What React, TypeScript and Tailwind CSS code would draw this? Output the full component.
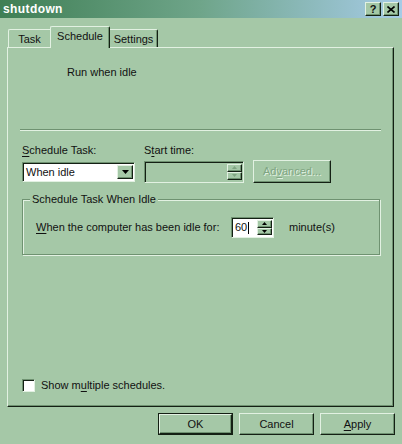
import React from "react";

const raised =
  "border border-t-[#e2f1e2] border-l-[#e2f1e2] border-r-[#142014] border-b-[#142014] shadow-[inset_-1px_-1px_0_#6f9271]";
const sunken =
  "border border-t-[#6f9271] border-l-[#6f9271] border-r-[#e2f1e2] border-b-[#e2f1e2] shadow-[inset_1px_1px_0_#142014]";

function Tri({ up, w = 7, h = 4, color = "#000" }: { up?: boolean; w?: number; h?: number; color?: string }) {
  return (
    <svg width={w} height={h} viewBox={`0 0 ${w} ${h}`}>
      <path d={up ? `M${w / 2} 0 L${w} ${h} L0 ${h}Z` : `M0 0 L${w} 0 L${w / 2} ${h}Z`} fill={color} />
    </svg>
  );
}

function Spin({ disabled }: { disabled?: boolean }) {
  const c = disabled ? "#7fa582" : "#000";
  return (
    <div className="flex flex-col w-[15px] self-stretch">
      <div className={`flex-1 flex items-center justify-center bg-[#a5c8a7] ${raised}`}>
        <Tri up w={5} h={3} color={c} />
      </div>
      <div className={`flex-1 flex items-center justify-center bg-[#a5c8a7] ${raised}`}>
        <Tri w={5} h={3} color={c} />
      </div>
    </div>
  );
}

function U({ children }: { children: React.ReactNode }) {
  return <span className="underline underline-offset-[2px]">{children}</span>;
}

export default function App() {
  return (
    <div className="w-[402px] h-[444px] bg-[#a5c8a7] flex flex-col font-['Liberation_Sans',Arial,sans-serif] text-[11px] leading-[13px] text-[#111] overflow-hidden">
      {/* Title bar */}
      <div className="h-[18px] flex items-center justify-between pl-[3px] pr-[3px] bg-gradient-to-r from-[#3f7f55] via-[#6fa58a] to-[#a6cbe6]">
        <span className="text-white font-bold text-[12px] tracking-[0.4px] leading-[14px]">shutdown</span>
        <div className="flex gap-[2px]">
          <div className={`w-[16px] h-[14px] bg-[#a5c8a7] flex items-center justify-center font-bold text-[11px] leading-[11px] ${raised}`}>?</div>
          <div className={`w-[16px] h-[14px] bg-[#a5c8a7] flex items-center justify-center ${raised}`}>
            <svg width="8" height="7" viewBox="0 0 8 7">
              <path d="M0.5 0.5 L7.5 6.5 M7.5 0.5 L0.5 6.5" stroke="#000" strokeWidth="1.6" />
            </svg>
          </div>
        </div>
      </div>

      {/* Tabs */}
      <div className="relative z-10 flex items-end mt-[8px] ml-[8px] -mb-[1px] h-[22px]">
        <div className="w-[42px] h-[18px] mb-[1px] flex items-center justify-center pt-[2px] border-t border-l border-t-[#e2f1e2] border-l-[#e2f1e2] rounded-tl-[2px]">
          Task
        </div>
        <div className="w-[60px] h-[22px] bg-[#a5c8a7] flex items-center justify-center pb-[2px] border-t border-l border-r border-t-[#e2f1e2] border-l-[#e2f1e2] border-r-[#142014] shadow-[inset_-1px_0_0_#6f9271] rounded-t-[2px]">
          Schedule
        </div>
        <div className="w-[48px] h-[18px] mb-[1px] flex items-center justify-center pt-[2px] border-t border-r border-t-[#e2f1e2] border-r-[#142014] shadow-[inset_-1px_0_0_#6f9271] rounded-tr-[2px]">
          Settings
        </div>
      </div>

      {/* Panel */}
      <div className={`ml-[7px] w-[387px] h-[360px] flex flex-col ${raised}`}>
        <div className="mt-[18px] ml-[59px]">Run when idle</div>

        <div className="mt-[50px] ml-[12px] w-[361px] h-[2px] border-t border-b border-t-[#6f9271] border-b-[#e2f1e2]" />

        <div className="mt-[13px] ml-[14px] flex">
          <div className="w-[122px] flex flex-col">
            <div>
              <U>S</U>chedule Task:
            </div>
            <div className={`mt-[5px] w-[113px] h-[20px] bg-white flex items-stretch p-[2px] pr-[1px] ${sunken}`}>
              <div className="flex-1 pl-[1px] flex items-center">When idle</div>
              <div className={`w-[16px] flex items-center justify-center bg-[#a5c8a7] ${raised}`}>
                <Tri w={7} h={4} />
              </div>
            </div>
          </div>
          <div className="flex flex-col">
            <div>
              S<U>t</U>art time:
            </div>
            <div className="mt-[3px] flex items-center">
              <div className={`w-[100px] h-[22px] flex items-stretch justify-end p-[2px] pr-[1px] ${sunken}`}>
                <Spin disabled />
              </div>
              <div
                className={`ml-[9px] w-[78px] h-[23px] flex items-center justify-center text-[#7fa582] [text-shadow:1px_1px_0_#e2f1e2] ${raised}`}
              >
                Ad<U>v</U>anced...
              </div>
            </div>
          </div>
        </div>

        {/* Group box */}
        <div className="relative mt-[16px] ml-[14px] w-[358px] h-[56px] border border-[#6f9271] shadow-[inset_1px_1px_0_#e2f1e2,1px_1px_0_#e2f1e2]">
          <div className="absolute -top-[7px] left-[7px] px-[2px] bg-[#a5c8a7]">Schedule Task When Idle</div>
          <div className="mt-[17px] ml-[13px] flex items-center">
            <div className="w-[195px]">
              <U>W</U>hen the computer has been idle for:
            </div>
            <div className={`w-[43px] h-[21px] bg-white flex items-stretch p-[2px] pr-[1px] ${sunken}`}>
              <div className="flex-1 flex items-center pl-[1px]">
                60<span className="inline-block w-px h-[12px] bg-black ml-[1px]" />
              </div>
              <Spin />
            </div>
            <div className="ml-[15px]">minute(s)</div>
          </div>
        </div>

        <div className="mt-[124px] ml-[14px] flex items-center">
          <div className={`w-[13px] h-[13px] bg-white ${sunken}`} />
          <div className="ml-[6px]">
            Show m<U>u</U>ltiple schedules.
          </div>
        </div>
      </div>

      {/* Buttons */}
      <div className="mt-[6px] flex justify-end gap-[6px] pr-[7px]">
        <div className="w-[75px] h-[22px] border border-[#142014]">
          <div className={`w-full h-full flex items-center justify-center ${raised}`}>OK</div>
        </div>
        <div className={`w-[75px] h-[22px] flex items-center justify-center ${raised}`}>Cancel</div>
        <div className={`w-[75px] h-[22px] flex items-center justify-center ${raised}`}>
          <U>A</U>pply
        </div>
      </div>
    </div>
  );
}
